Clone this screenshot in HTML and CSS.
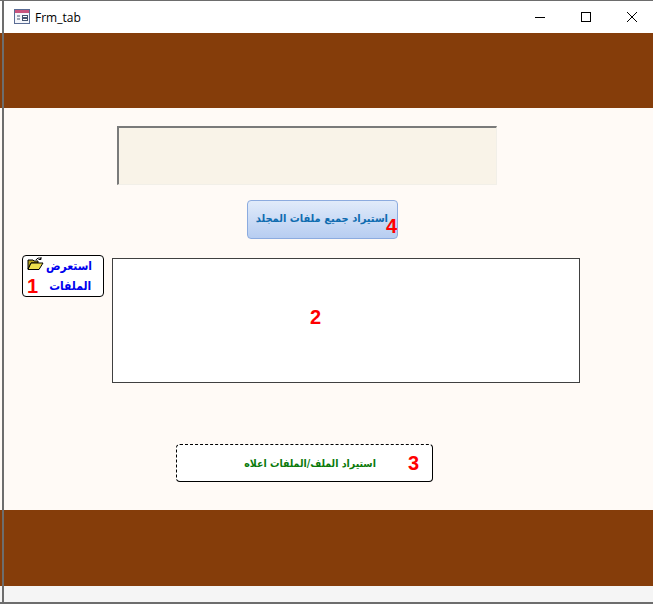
FILE: index.html
```html
<!DOCTYPE html>
<html lang="ar">
<head>
  <title>Frm_tab</title>
  <meta charset="utf-8">
  <link rel="stylesheet" href="styles.css">
</head>
<body>
  <div class="window">
    <!-- شريط العنوان -->
    <div class="titlebar">
      <svg class="form-icon" width="16" height="16" viewBox="0 0 16 16">
        <rect x="0.5" y="0.5" width="15" height="14" fill="#f4f6fb" stroke="#5a6c94"/>
        <rect x="1" y="1" width="14" height="3" fill="#c8547e"/>
        <path d="M3 7h3M3 10h3" stroke="#44546f"/>
        <rect x="8.5" y="6.5" width="5" height="2" fill="#fff" stroke="#44546f"/>
        <rect x="8.5" y="9.5" width="5" height="2" fill="#fff" stroke="#44546f"/>
      </svg>
      <span class="title-text">Frm_tab</span>
      <div class="window-buttons">
        <svg width="10" height="10" viewBox="0 0 10 10"><path d="M0 5.5h10" stroke="#000"/></svg>
        <svg width="10" height="10" viewBox="0 0 10 10"><rect x="0.5" y="0.5" width="9" height="9" fill="none" stroke="#000"/></svg>
        <svg width="10" height="10" viewBox="0 0 10 10"><path d="M0 0l10 10M10 0L0 10" stroke="#000"/></svg>
      </div>
    </div>

    <div class="band band-top"></div>

    <div class="content">
      <div class="textbox"></div>

      <button class="button button-blue" type="button">
        <span>استيراد جميع ملفات المجلد</span>
        <span class="num num-over">4</span>
      </button>

      <div class="files-row">
        <button class="button-browse" type="button">
          <span class="browse-line">
            <svg class="folder" width="17" height="14" viewBox="0 0 17 14">
              <path d="M1 3h5l1 1h4v2H4L1 12z" fill="#b5a21e" stroke="#000"/>
              <path d="M4 6h12l-4 6.500H1z" fill="#ecdf4e" stroke="#000"/>
              <path d="M9 3c1-2 3-2.500 5-1.500M14 0v2.500h-2.500" fill="none" stroke="#000"/>
            </svg>
            <span>استعرض</span>
          </span>
          <span class="browse-line browse-line-low">
            <span class="num">1</span>
            <span>الملفات</span>
          </span>
        </button>
        <div class="listbox"><span class="num">2</span></div>
      </div>

      <button class="button-import" type="button">
        <span class="import-label">استيراد الملف/الملفات اعلاه</span>
        <span class="num">3</span>
      </button>
    </div>

    <div class="band band-bottom"></div>
    <div class="statusbar"></div>
  </div>
</body>
</html>
```

FILE: styles.css
```css
*, *::before, *::after {
  margin: 0;
  padding: 0;
  box-sizing: border-box;
}

html, body {
  height: 100%;
}

body {
  background-color: #f5f5f5;
  font-family: "Liberation Sans", "DejaVu Sans", sans-serif;
}

.window {
  position: relative;
  display: flex;
  flex-direction: column;
  height: 604px;
  border-top: 1px solid #6d6d6d;
  border-bottom: 2px solid #6d6d6d;
}

/* the grey frame line runs over the bands */
.window::before {
  content: "";
  position: absolute;
  top: 0;
  bottom: 0;
  left: 2px;
  width: 2px;
  background-color: #6d6d6d;
}

.titlebar {
  display: flex;
  align-items: center;
  flex: 0 0 32px;
  padding-left: 14px;
  background-color: #ffffff;
}

.form-icon {
  margin-right: 5px;
}

.title-text {
  font-family: "Open Sans", sans-serif;
  font-size: 12px;
  color: #000000;
}

.window-buttons {
  display: flex;
  gap: 36px;
  margin-left: auto;
  padding-right: 16px;
}

.window-buttons svg {
  display: block;
}

.band {
  background-color: #853d0a;
}

.band-top {
  flex: 0 0 75px;
}

.band-bottom {
  flex: 0 0 76px;
}

.content {
  flex: 0 0 402px;
  display: flex;
  flex-direction: column;
  background-color: #fffaf6;
}

.textbox {
  width: 380px;
  height: 59px;
  margin: 18px 0 0 117px;
  border-top: 2px solid #7a7a7a;
  border-left: 2px solid #7a7a7a;
  border-right: 1px solid #f2efe8;
  border-bottom: 1px solid #f2efe8;
  background-color: #f9f3e8;
}

.num {
  color: #ff0000;
  font-family: "Liberation Sans", sans-serif;
  font-size: 20px;
  font-weight: 700;
  line-height: 1;
}

.button {
  position: relative;
  display: flex;
  align-items: center;
  justify-content: flex-end;
  width: 151px;
  height: 39px;
  margin: 15px 0 0 247px;
  padding: 0 9px 2px 0;
  border: 1px solid #8cabdf;
  border-radius: 4px;
  background: linear-gradient(#e1ebfa, #b7cdf1);
  color: #0f6cb0;
  font-family: "DejaVu Sans Condensed", "DejaVu Sans", sans-serif;
  font-size: 11px;
  font-weight: 700;
  white-space: nowrap;
}

.num-over {
  position: absolute;
  right: 0;
  top: 15px;
}

.files-row {
  display: flex;
  align-items: flex-start;
  margin: 16px 0 0 22px;
}

.button-browse {
  display: flex;
  flex-direction: column;
  width: 82px;
  height: 42px;
  margin-right: 8px;
  border: 1px solid #000000;
  border-radius: 4px;
  background-color: #ffffff;
  color: #0000ee;
  font-family: "DejaVu Sans Condensed", "DejaVu Sans", sans-serif;
  font-size: 12px;
  font-weight: 700;
}

.browse-line {
  display: flex;
  align-items: center;
  height: 20px;
  padding-left: 4px;
  gap: 2px;
  line-height: 1;
  white-space: nowrap;
}

.folder {
  margin-bottom: 4px;
}

.browse-line-low {
  gap: 11px;
}

.listbox {
  display: flex;
  align-items: center;
  width: 468px;
  height: 125px;
  margin-top: 3px;
  padding: 0 0 8px 197px;
  border: 1px solid #404040;
  background-color: #ffffff;
}

.button-import {
  display: flex;
  align-items: center;
  justify-content: flex-end;
  gap: 32px;
  width: 257px;
  height: 38px;
  margin: 61px 0 0 176px;
  padding-right: 13px;
  border: 1px solid #000000;
  border-left-style: dashed;
  border-top-style: dashed;
  border-radius: 4px;
  background-color: #ffffff;
  color: #0a7a0a;
  font-family: "DejaVu Sans Condensed", "DejaVu Sans", sans-serif;
  font-size: 10.5px;
  font-weight: 700;
  white-space: nowrap;
}

.statusbar {
  flex: 1;
  background-color: #f5f5f5;
}
```
